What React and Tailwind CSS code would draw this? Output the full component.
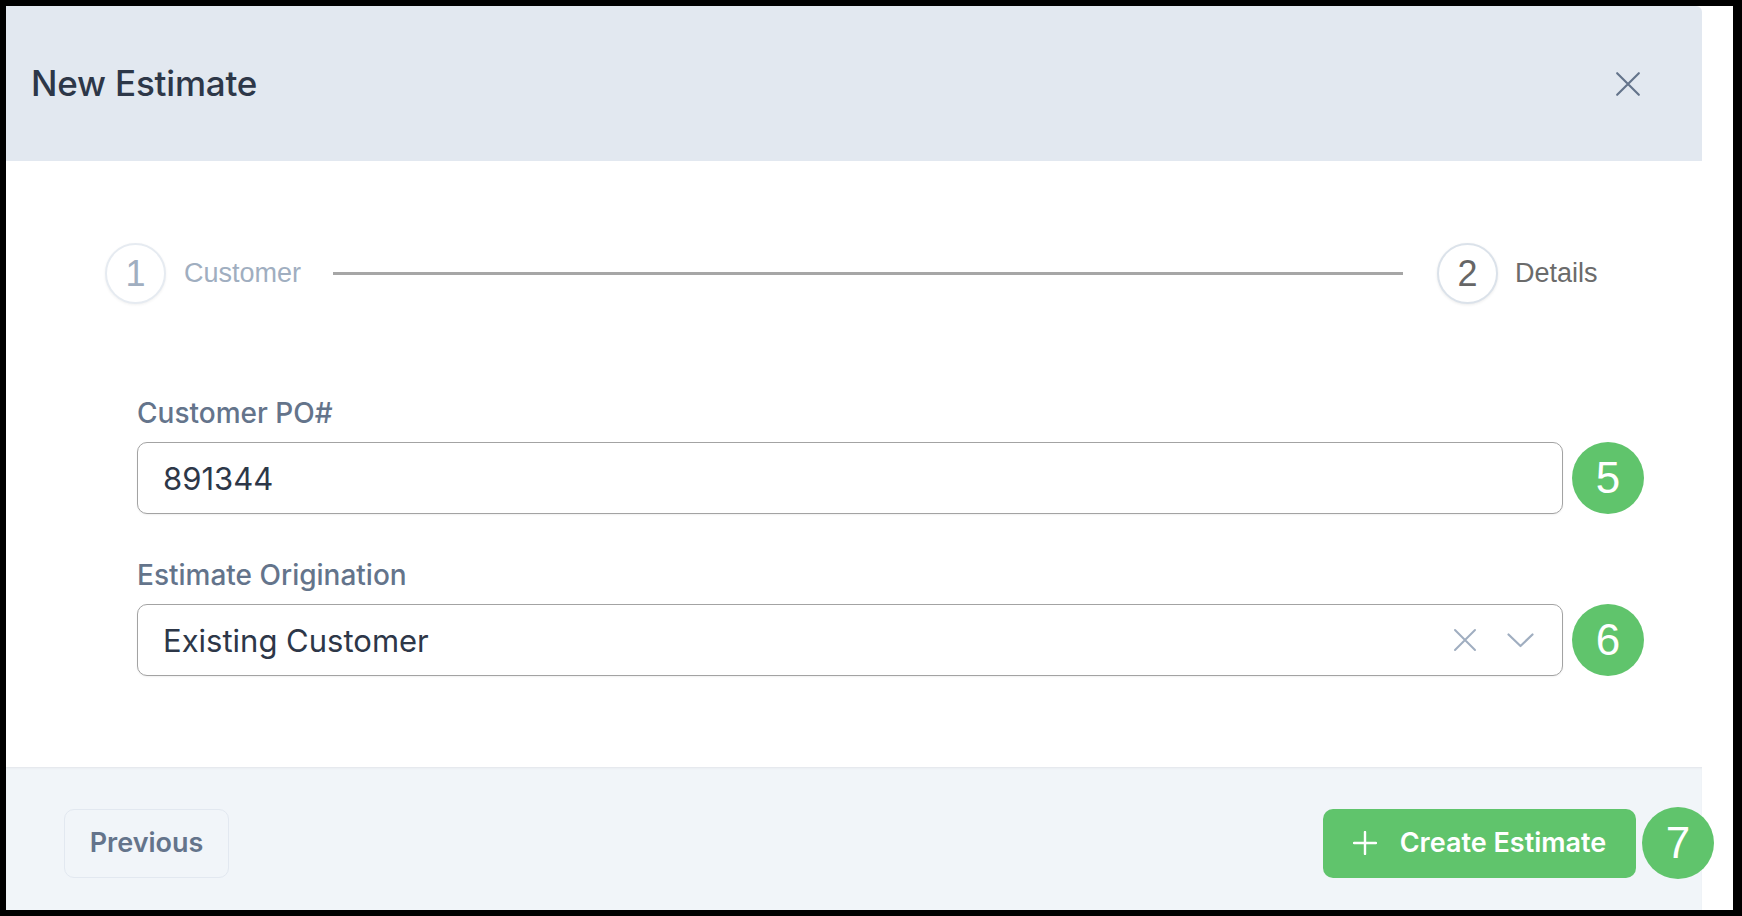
import React from "react";

function Badge({ n, className = "" }) {
  return (
    <div
      className={`flex h-[72px] w-[72px] shrink-0 items-center justify-center rounded-full bg-[#60c46c] text-[44px] leading-none text-white font-['Liberation_Sans',Arial,sans-serif] ${className}`}
    >
      {n}
    </div>
  );
}

function XIcon({ size, color, stroke = 2 }) {
  return (
    <svg width={size} height={size} viewBox="0 0 24 24" fill="none" stroke={color} strokeWidth={stroke} strokeLinecap="round">
      <path d="M2 2L22 22M22 2L2 22" />
    </svg>
  );
}

export default function App() {
  return (
    <div className="flex h-[916px] w-[1742px] bg-black pt-[6px] pl-[6px] pr-[9px] pb-[6px] font-['Inter','Noto_Sans',sans-serif]">
      <div className="flex flex-1 bg-white">
        <div className="flex w-[1696px] flex-col">
          {/* Header */}
          <div className="flex h-[155px] shrink-0 items-center justify-between rounded-tr-[6px] bg-[#e2e8f0] pl-[25px] pr-[61px]">
            <h1 className="text-[35px] font-medium leading-none text-[#2d3748] tracking-[-0.2px]">New Estimate</h1>
            <XIcon size={26} color="#64748b" stroke={2} />
          </div>

          {/* Body */}
          <div className="flex flex-1 flex-col bg-white pt-[82px] rounded-br-[8px]">
            {/* Stepper */}
            <div className="flex items-center pl-[99px] font-['Liberation_Sans',Arial,sans-serif]">
              <div className="flex h-[61px] w-[61px] items-center justify-center rounded-full border-2 border-[#e6ebf1] bg-white text-[36px] text-[#a0aec0] shadow-[0_1px_3px_rgba(0,0,0,0.06)]">
                1
              </div>
              <span className="ml-[18px] text-[27px] text-[#a0aec0]">Customer</span>
              <div className="ml-[32px] h-[3px] w-[1070px] bg-[#a6a6a6]" />
              <div className="ml-[34px] flex h-[61px] w-[61px] items-center justify-center rounded-full border-2 border-[#dbe2ea] bg-white text-[36px] text-[#666666] shadow-[0_1px_3px_rgba(0,0,0,0.08)]">
                2
              </div>
              <span className="ml-[17px] text-[27px] text-[#6b6b6b]">Details</span>
            </div>

            {/* Form */}
            <div className="mt-[91px] flex flex-col pl-[131px]">
              <label className="text-[28px] font-medium leading-[36px] text-[#64748b]">Customer PO#</label>
              <div className="mt-[11px] flex items-center">
                <div className="flex h-[72px] w-[1426px] items-center rounded-[10px] border-[1.5px] border-[#a3a3a3] bg-white pl-[25px] shadow-[0_1px_2px_rgba(0,0,0,0.06)]">
                  <span className="text-[31px] leading-none text-[#2d3748]">891344</span>
                </div>
                <Badge n="5" className="ml-[9px]" />
              </div>

              <label className="mt-[43px] text-[28px] font-medium leading-[36px] text-[#64748b]">Estimate Origination</label>
              <div className="mt-[11px] flex items-center">
                <div className="flex h-[72px] w-[1426px] items-center justify-between rounded-[10px] border-[1.5px] border-[#a3a3a3] bg-white pl-[25px] pr-[28px] shadow-[0_1px_2px_rgba(0,0,0,0.06)]">
                  <span className="text-[31px] leading-none text-[#2d3748]">Existing Customer</span>
                  <div className="flex items-center gap-[30px]">
                    <XIcon size={24} color="#a0aec0" stroke={2} />
                    <svg width="27" height="15" viewBox="0 0 27 15" fill="none" stroke="#a0aec0" strokeWidth="2.2" strokeLinecap="round" strokeLinejoin="round">
                      <path d="M1.5 1.5L13.5 13L25.5 1.5" />
                    </svg>
                  </div>
                </div>
                <Badge n="6" className="ml-[9px]" />
              </div>
            </div>
          </div>

          {/* Footer */}
          <div className="flex h-[143px] shrink-0 items-center justify-between border-t border-[#e6e9ee] bg-[#f1f5f9] pl-[58px] pt-[8px] shadow-[inset_0_1px_2px_rgba(0,0,0,0.03)]">
            <button className="flex h-[69px] w-[165px] items-center justify-center rounded-[10px] border-[1.5px] border-[#e2e8f0] bg-[#f1f5f9] text-[27px] font-semibold text-[#64748b]">
              Previous
            </button>
            <div className="-mr-[12px] flex items-center">
              <button className="flex h-[69px] w-[313px] items-center justify-center gap-[23px] rounded-[10px] bg-[#60c46c] text-[27px] font-semibold text-white">
                <svg width="24" height="24" viewBox="0 0 24 24" fill="none" stroke="white" strokeWidth="2.4" strokeLinecap="round">
                  <path d="M12 1V23M1 12H23" />
                </svg>
                <span>Create Estimate</span>
              </button>
              <Badge n="7" className="ml-[6px]" />
            </div>
          </div>
        </div>
      </div>
    </div>
  );
}
